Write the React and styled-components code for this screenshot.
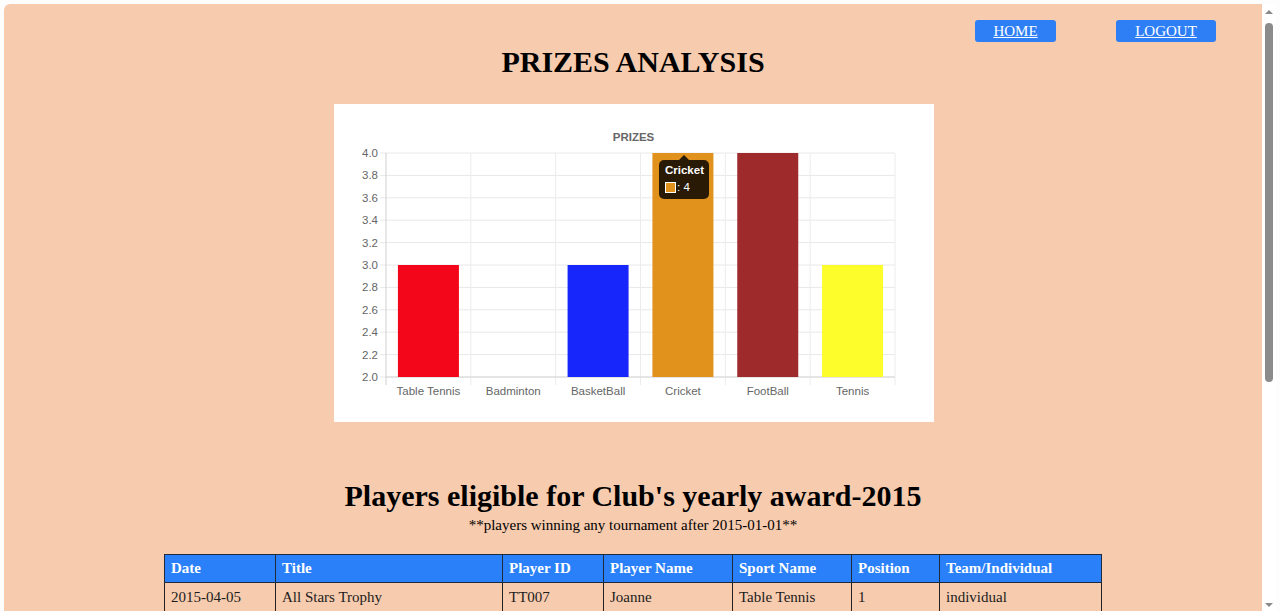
import React from "react";
import styled, { createGlobalStyle } from "styled-components";

const Global = createGlobalStyle`
  html, body { margin: 0; padding: 0; background: #ffffff; }
  body { font-family: "Liberation Serif", "Times New Roman", serif; overflow: hidden; }
  * { box-sizing: border-box; }
`;

const Frame = styled.div`
  display: flex;
  width: 1280px;
  height: 611px;
  padding: 4px 4px 0 4px;
  background: #fdfdfd;
`;

const Page = styled.div`
  flex: 1;
  background: #f6cbae;
  border-top-left-radius: 6px;
  display: flex;
  flex-direction: column;
  align-items: center;
  overflow: hidden;
`;

const Track = styled.div`
  width: 14px;
  background: #ffffff;
  display: flex;
  flex-direction: column;
  align-items: center;
  padding-top: 4px;
`;

const Arrow = styled.div`
  width: 0;
  height: 0;
  border-left: 4px solid transparent;
  border-right: 4px solid transparent;
  ${(p) => (p.$down ? "border-top: 4px solid #8a8a8a;" : "border-bottom: 4px solid #8a8a8a;")}
  margin: ${(p) => (p.$down ? "auto 0 4px 0" : "2px 0 0 0")};
`;

const Thumb = styled.div`
  width: 8px;
  height: 359px;
  margin-top: 9px;
  background: #8b8b8b;
  border-radius: 4px;
`;

const Nav = styled.div`
  align-self: stretch;
  display: flex;
  justify-content: flex-end;
  gap: 60px;
  padding-right: 46px;
  margin-top: 16px;
`;

const NavButton = styled.a`
  display: flex;
  align-items: center;
  justify-content: center;
  width: ${(p) => p.$w}px;
  height: 22px;
  background: #2e7ff6;
  border-radius: 3px;
  color: #ffffff;
  font-family: "Liberation Serif", serif;
  font-size: 15px;
  text-decoration: underline;
  cursor: pointer;
`;

const Title = styled.h1`
  margin: 3px 0 0 0;
  font-family: "Liberation Serif", serif;
  font-size: 30px;
  line-height: 34px;
  font-weight: bold;
  color: #000;
`;

const ChartBox = styled.div`
  margin-top: 25px;
  margin-left: 1px;
  width: 600px;
  height: 318px;
  background: #ffffff;
`;

const Heading = styled.h2`
  margin: 56px 0 0 0;
  font-family: "Liberation Serif", serif;
  font-size: 30px;
  line-height: 36px;
  font-weight: bold;
  color: #000;
`;

const Note = styled.p`
  margin: 2px 0 0 0;
  font-family: "Liberation Serif", serif;
  font-size: 15px;
  line-height: 18px;
  color: #000;
`;

const Table = styled.table`
  margin-top: 20px;
  width: 937px;
  border-collapse: collapse;
  table-layout: fixed;
  font-family: "Liberation Serif", serif;
  font-size: 15px;
`;

const Th = styled.th`
  background: #2a80f8;
  color: #ffffff;
  font-weight: bold;
  text-align: left;
  border: 1px solid #1f2a3a;
  padding: 4px 6px 5px 6px;
  line-height: 18px;
`;

const Td = styled.td`
  color: #1c1c1c;
  border: 1px solid #222;
  padding: 5px 6px 5px 6px;
  line-height: 18px;
`;

const cats = ["Table Tennis", "Badminton", "BasketBall", "Cricket", "FootBall", "Tennis"];
const values = [3, 2, 3, 4, 4, 3];
const colors = ["#f3061a", "", "#1726fb", "#e0921d", "#9e2a2c", "#fdfd2b"];

const L = 52, R = 561, T = 49, B = 273;
const cw = (R - L) / 6;
const yOf = (v) => B - (v - 2) * ((B - T) / 2);
const FONT = "Liberation Sans, Arial, sans-serif";

function Chart() {
  const ticks = [];
  for (let i = 0; i <= 10; i++) ticks.push(2 + i * 0.2);
  return (
    <svg width="600" height="318" viewBox="0 0 600 318">
      <text x="299.5" y="37" textAnchor="middle" fontFamily={FONT} fontSize="11.5" fontWeight="bold" fill="#666">PRIZES</text>
      {ticks.map((t) => (
        <g key={t}>
          <line x1={L - 6} x2={R} y1={yOf(t)} y2={yOf(t)} stroke="#e8e8e8" strokeWidth="1" />
          <text x={L - 8} y={yOf(t) + 4} textAnchor="end" fontFamily={FONT} fontSize="11.5" fill="#666">{t.toFixed(1)}</text>
        </g>
      ))}
      {Array.from({ length: 7 }).map((_, i) => (
        <line key={i} x1={L + i * cw} x2={L + i * cw} y1={T} y2={B + 8} stroke={i === 0 ? "#d0d0d0" : "#ececec"} strokeWidth="1" />
      ))}
      <line x1={L} x2={R} y1={B} y2={B} stroke="#d6d6d6" strokeWidth="1" />
      {values.map((v, i) =>
        v > 2 ? (
          <rect key={i} x={L + i * cw + (cw - 61) / 2} y={yOf(v)} width="61" height={B - yOf(v)} fill={colors[i]} />
        ) : null
      )}
      {cats.map((c, i) => (
        <text key={c} x={L + (i + 0.5) * cw} y={291} textAnchor="middle" fontFamily={FONT} fontSize="11.5" fill="#666">{c}</text>
      ))}
      <g>
        <path d="M345 56 L350 51 L355 56 Z" fill="rgba(0,0,0,0.82)" />
        <rect x="325" y="56" width="50" height="39" rx="5" fill="rgba(0,0,0,0.82)" />
        <text x="331" y="70" fontFamily={FONT} fontSize="11.5" fontWeight="bold" fill="#fff">Cricket</text>
        <rect x="331.5" y="78.5" width="10" height="10" fill="#e0921d" stroke="#fff" strokeWidth="1" />
        <text x="343" y="87" fontFamily={FONT} fontSize="11.5" fill="#fff">: 4</text>
      </g>
    </svg>
  );
}

const cols = [111, 227, 101, 129, 119, 88, 162];
const headers = ["Date", "Title", "Player ID", "Player Name", "Sport Name", "Position", "Team/Individual"];
const rows = [["2015-04-05", "All Stars Trophy", "TT007", "Joanne", "Table Tennis", "1", "individual"]];

export default function App() {
  return (
    <>
      <Global />
      <Frame>
        <Page>
          <Nav>
            <NavButton $w={81}>HOME</NavButton>
            <NavButton $w={100}>LOGOUT</NavButton>
          </Nav>
          <Title>PRIZES ANALYSIS</Title>
          <ChartBox>
            <Chart />
          </ChartBox>
          <Heading>Players eligible for Club's yearly award-2015</Heading>
          <Note>**players winning any tournament after 2015-01-01**</Note>
          <Table>
            <colgroup>
              {cols.map((w, i) => (
                <col key={i} style={{ width: w }} />
              ))}
            </colgroup>
            <thead>
              <tr>
                {headers.map((h) => (
                  <Th key={h}>{h}</Th>
                ))}
              </tr>
            </thead>
            <tbody>
              {rows.map((r, i) => (
                <tr key={i}>
                  {r.map((c, j) => (
                    <Td key={j}>{c}</Td>
                  ))}
                </tr>
              ))}
            </tbody>
          </Table>
        </Page>
        <Track>
          <Arrow />
          <Thumb />
          <Arrow $down />
        </Track>
      </Frame>
    </>
  );
}
